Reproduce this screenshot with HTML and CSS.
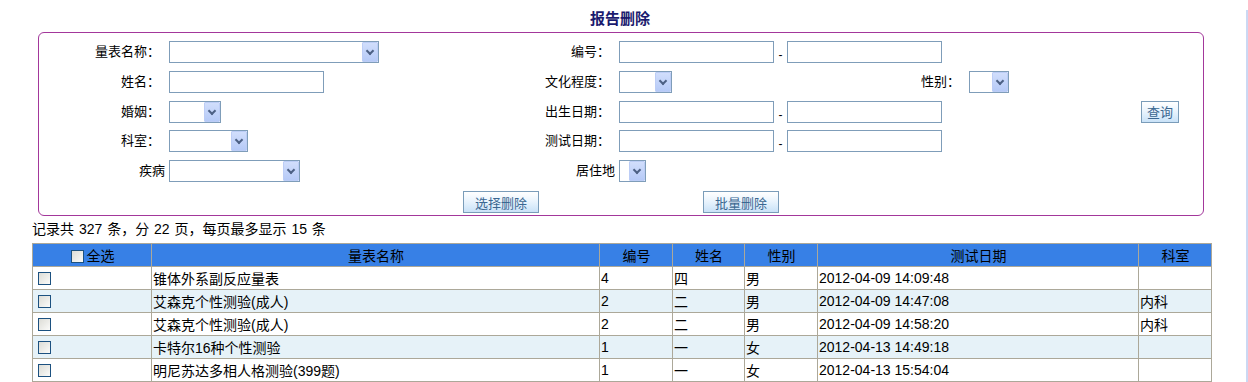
FILE: index.html
```html
<!DOCTYPE html>
<html lang="zh-CN">
<head>
    <meta charset="UTF-8">
    <title>报告删除</title>
    <link rel="stylesheet" href="styles.css">
</head>
<body>
    <div class="page">
        <h1 class="title">报告删除</h1>

        <form class="filter">
            <label class="lbl colon">量表名称：</label>
            <div class="field"><span class="combo w210"><select></select><i class="arrow"></i></span></div>
            <label class="lbl colon">编号：</label>
            <div class="field span2"><input class="text" type="text"><span class="dash">-</span><input class="text" type="text"></div>
            <div></div><div></div>

            <label class="lbl colon">姓名：</label>
            <div class="field"><input class="text" type="text"></div>
            <label class="lbl colon">文化程度：</label>
            <div class="field"><span class="combo w53"><select></select><i class="arrow"></i></span></div>
            <label class="lbl colon">性别：</label>
            <div class="field"><span class="combo w40"><select></select><i class="arrow"></i></span></div>
            <div></div>

            <label class="lbl colon">婚姻：</label>
            <div class="field"><span class="combo w52"><select></select><i class="arrow"></i></span></div>
            <label class="lbl colon">出生日期：</label>
            <div class="field span2"><input class="text" type="text"><span class="dash">-</span><input class="text" type="text"></div>
            <div></div>
            <div class="field"><button class="btn small" type="button">查询</button></div>

            <label class="lbl colon">科室：</label>
            <div class="field"><span class="combo w79"><select></select><i class="arrow"></i></span></div>
            <label class="lbl colon">测试日期：</label>
            <div class="field span2"><input class="text" type="text"><span class="dash">-</span><input class="text" type="text"></div>
            <div></div><div></div>

            <label class="lbl">疾病</label>
            <div class="field"><span class="combo w131"><select></select><i class="arrow"></i></span></div>
            <label class="lbl">居住地</label>
            <div class="field"><span class="combo w27"><select></select><i class="arrow"></i></span></div>
            <div></div><div></div><div></div>

            <div class="actions">
                <button class="btn" type="button">选择删除</button>
                <button class="btn" type="button">批量删除</button>
            </div>
        </form>

        <p class="summary">记录共 <b>327</b> 条，分 <b>22</b> 页，每页最多显示 <b>15</b> 条</p>

        <table class="list">
            <colgroup>
                <col style="width:119px"><col style="width:448px"><col style="width:73px">
                <col style="width:72px"><col style="width:73px"><col style="width:321px"><col style="width:73px">
            </colgroup>
            <thead>
                <tr>
                    <th><input class="check" type="checkbox">全选</th>
                    <th>量表名称</th>
                    <th>编号</th>
                    <th>姓名</th>
                    <th>性别</th>
                    <th>测试日期</th>
                    <th>科室</th>
                </tr>
            </thead>
            <tbody>
                <tr>
                    <td class="pick"><input class="check" type="checkbox"></td>
                    <td>锥体外系副反应量表</td><td>4</td><td>四</td><td>男</td>
                    <td>2012-04-09 14:09:48</td><td></td>
                </tr>
                <tr>
                    <td class="pick"><input class="check" type="checkbox"></td>
                    <td>艾森克个性测验(成人)</td><td>2</td><td>二</td><td>男</td>
                    <td>2012-04-09 14:47:08</td><td>内科</td>
                </tr>
                <tr>
                    <td class="pick"><input class="check" type="checkbox"></td>
                    <td>艾森克个性测验(成人)</td><td>2</td><td>二</td><td>男</td>
                    <td>2012-04-09 14:58:20</td><td>内科</td>
                </tr>
                <tr>
                    <td class="pick"><input class="check" type="checkbox"></td>
                    <td>卡特尔16种个性测验</td><td>1</td><td>一</td><td>女</td>
                    <td>2012-04-13 14:49:18</td><td></td>
                </tr>
                <tr>
                    <td class="pick"><input class="check" type="checkbox"></td>
                    <td>明尼苏达多相人格测验(399题)</td><td>1</td><td>一</td><td>女</td>
                    <td>2012-04-13 15:54:04</td><td></td>
                </tr>
            </tbody>
        </table>
    </div>
</body>
</html>
```

FILE: styles.css
```css
* {
    margin: 0;
    padding: 0;
    box-sizing: border-box;
}

body {
    font-family: "Liberation Sans", "Noto Sans CJK SC", sans-serif;
    font-size: 12px;
    color: #000;
    background: #fff;
}

.page {
    width: 1248px;
    min-height: 382px;
    padding-left: 32px;
    border-right: 2px solid #cbd8f3;
}

.title {
    margin-top: 10px;
    padding-right: 38px;
    font-size: 15px;
    line-height: 18px;
    font-weight: bold;
    text-align: center;
    color: #1a1a6e;
}

/* search box */
.filter {
    display: grid;
    grid-template-columns: 130px 250px 200px 280px 70px 172px auto;
    row-gap: 6px;
    width: 1166px;
    height: 184px;
    margin: 4px 0 0 6px;
    padding-top: 8px;
    border: 1px solid #a3379b;
    border-radius: 6px;
}

.lbl {
    padding-right: 4px;
    text-align: right;
    font-size: 13px;
    line-height: 22px;
    white-space: nowrap;
}

.lbl.colon {
    padding-right: 9px;
}

.field {
    display: flex;
    align-items: center;
    height: 22px;
}

.span2 {
    grid-column: span 2;
}

.text {
    width: 155px;
    height: 22px;
    border: 1px solid #7f9db9;
    font: inherit;
    outline: none;
}

.dash {
    align-self: flex-end;
    width: 13px;
    padding-bottom: 1px;
    text-align: center;
    font-size: 12px;
    line-height: 14px;
}

.combo {
    display: flex;
    height: 22px;
    border: 1px solid #7f9db9;
    background: #fff;
}

.combo select {
    flex: 1;
    min-width: 0;
    border: 0;
    appearance: none;
    background: transparent;
    outline: none;
}

.arrow {
    position: relative;
    width: 16px;
    height: 20px;
    border: 1px solid #bccdf6;
    border-radius: 1px;
    background: linear-gradient(#d1defc, #b6caf7);
}

.arrow::after {
    content: "";
    position: absolute;
    left: 4px;
    top: 5px;
    width: 4px;
    height: 4px;
    border-right: 2px solid #4d6185;
    border-bottom: 2px solid #4d6185;
    transform: rotate(45deg);
}

.w210 { width: 210px; }
.w131 { width: 131px; }
.w79 { width: 79px; }
.w53 { width: 53px; }
.w52 { width: 52px; }
.w40 { width: 40px; }
.w27 { width: 27px; }

.btn {
    width: 76px;
    height: 22px;
    border: 1px solid #7a9cb9;
    background: linear-gradient(#ffffff, #eaf4fd 45%, #c9e2f8);
    color: #3b6791;
    font-family: "Noto Sans CJK SC", sans-serif;
    font-size: 13px;
}

.btn.small {
    width: 38px;
}

.actions {
    grid-column: 1 / -1;
    display: flex;
    gap: 164px;
    padding-left: 424px;
    margin-top: 1px;
}

.summary {
    font-size: 14px;
    line-height: 27px;
}

.summary b {
    font-weight: normal;
    margin: 0 1px;
}

/* result table */
.list {
    width: 1179px;
    table-layout: fixed;
    border-collapse: collapse;
    font-size: 14px;
}

.list th,
.list td {
    height: 23px;
    border: 1px solid #aca899;
    padding: 0 0 0 1px;
    white-space: nowrap;
    overflow: hidden;
}

.list th {
    background: #3780e6;
    font-weight: normal;
    text-align: center;
}

.list tbody tr:nth-child(even) {
    background: #e6f2f8;
}

.list td.pick {
    padding-left: 5px;
}

.check {
    appearance: none;
    width: 13px;
    height: 13px;
    vertical-align: -2px;
    border: 1px solid #1c5180;
    background: linear-gradient(135deg, #dcdcd6, #fbfbf9);
}

th .check {
    margin-right: 3px;
}
```
